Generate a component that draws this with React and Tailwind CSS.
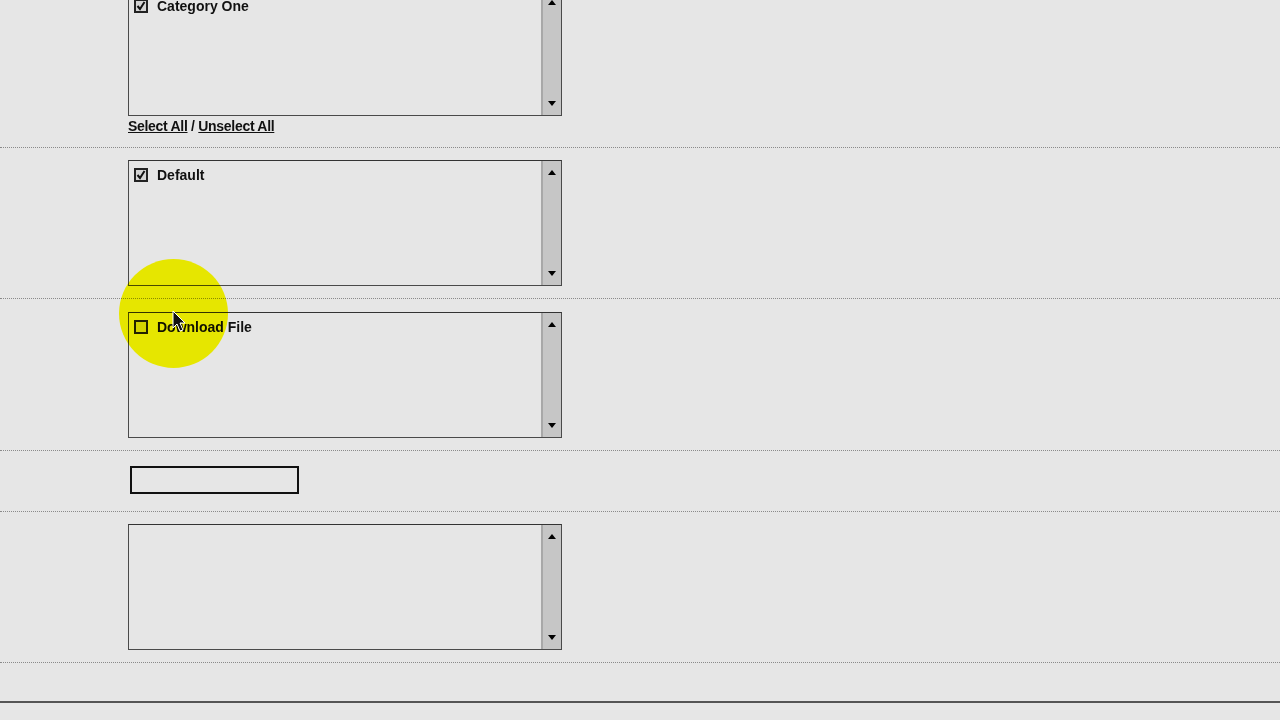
import React from 'react'

const Scrollbar = () => (
  <div className="flex flex-col justify-between w-[20px] bg-[#c6c6c6] border-l-2 border-[#a8a8a8] py-[9px]">
    <div className="flex justify-center">
      <div className="w-0 h-0 border-l-[4px] border-r-[4px] border-b-[5px] border-l-transparent border-r-transparent border-b-black" />
    </div>
    <div className="flex justify-center">
      <div className="w-0 h-0 border-l-[4px] border-r-[4px] border-t-[5px] border-l-transparent border-r-transparent border-t-black" />
    </div>
  </div>
)

const CheckBox = ({ checked }) => (
  <div className="w-[14px] h-[14px] border-2 border-[#222] bg-[#d4d4d4] flex items-center justify-center">
    {checked && (
      <svg width="10" height="10" viewBox="0 0 10 10">
        <path d="M1.5 5 L4 8 L8.5 1" stroke="#111" strokeWidth="2" fill="none" />
      </svg>
    )}
  </div>
)

const ListBox = ({ label, checked, first }) => (
  <div className="flex w-[434px] h-[126px] border border-[#4a4a4a] border-t-[#333] bg-[#e6e6e6]">
    <div className={first ? 'flex-1 px-[5px] pt-[8px]' : 'flex-1 px-[5px] pt-[7px]'}>
      {label && (
        <div className="flex items-center gap-[9px]">
          <CheckBox checked={checked} />
          <span className="text-[14px] font-bold text-[#111] leading-none">{label}</span>
        </div>
      )}
    </div>
    <Scrollbar />
  </div>
)

const Row = ({ children, className = '' }) => (
  <div className={`border-b border-dotted border-[#8a8a8a] pl-[128px] ${className}`}>{children}</div>
)

const App = () => {
  return (
    <div
      className="relative w-[1280px] h-[720px] overflow-hidden bg-[#e6e6e6]"
      style={{ fontFamily: '"Liberation Sans", Arial, sans-serif' }}
    >
      <div className="-mt-[10px]">
        <Row className="pb-[10px]">
          <ListBox label="Category One" checked first />
          <div className="text-[14px] font-bold text-[#111] tracking-[-0.3px]">
            <span className="underline">Select All</span> / <span className="underline">Unselect All</span>
          </div>
        </Row>
        <Row className="pt-[12px] pb-[12px]">
          <ListBox label="Default" checked />
        </Row>
        <Row className="pt-[13px] pb-[12px]">
          <ListBox label="Download File" />
        </Row>
        <Row className="pt-[15px] pb-[17px]">
          <div className="ml-[2px] w-[169px] h-[28px] border-2 border-[#111] bg-[#e6e6e6]" />
        </Row>
        <Row className="pt-[12px] pb-[12px]">
          <ListBox />
        </Row>
        <div className="h-[38px]" />
        <div className="border-b-2 border-[#555]" />
      </div>

      {/* click highlight */}
      <div className="absolute left-[119px] top-[259px] w-[109px] h-[109px] rounded-full bg-[#ffff00] mix-blend-multiply" />
      <svg className="absolute left-[172px] top-[310px]" width="16" height="24" viewBox="0 0 16 24">
        <path d="M1 1 L1 18 L5 14 L8 21 L11 20 L8 13 L13 13 Z" fill="#111" stroke="#fff" strokeWidth="1" />
      </svg>
    </div>
  )
}

export default App
